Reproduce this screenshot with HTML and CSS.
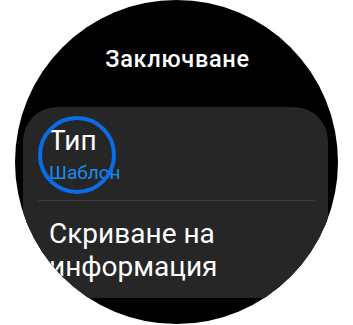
FILE: index.html
```html
<!DOCTYPE html>
<html lang="bg">
<head>
<meta charset="utf-8">
<link rel="stylesheet" href="styles.css">
</head>
<body>
<div class="watch">
  <div class="title">Заключване</div>
  <div class="card">
    <div class="item first">
      <div class="label">Тип</div>
      <div class="sub">Шаблон</div>
      <span class="ring"></span>
    </div>
    <div class="divider"></div>
    <div class="item">
      <div class="label multi">Скриване на информация</div>
    </div>
  </div>
</div>
</body>
</html>
```
FILE: styles.css
```css
html, body {
  margin: 0;
  padding: 0;
  background: #fff;
}
body {
  width: 353px;
  height: 325px;
  overflow: hidden;
  font-family: Roboto, "Noto Sans", sans-serif;
}
.watch {
  width: 323px;
  height: 324px;
  margin-left: 15px;
  border-radius: 50%;
  background: #000;
  overflow: hidden;
  display: flex;
  flex-direction: column;
  align-items: flex-start;
}
.title {
  align-self: stretch;
  text-align: center;
  color: #fff;
  font-size: 23.5px;
  line-height: 24px;
  font-weight: 500;
  letter-spacing: 0.7px;
  padding-top: 47px;
  padding-left: 2px;
  height: 24px;
}
.card {
  margin-top: 36px;
  margin-left: 8px;
  width: 305px;
  height: 191px;
  background: #262626;
  border-radius: 34px 34px 0 0;
  display: flex;
  flex-direction: column;
}
.item {
  padding-left: 26px;
  position: relative;
}
.item.first {
  padding-top: 18px;
}
.label {
  color: #fff;
  font-size: 28px;
  line-height: 32px;
}
.label.multi {
  line-height: 33px;
  padding-top: 16px;
  width: 200px;
}
.sub {
  color: #1a8cf0;
  font-size: 19px;
  line-height: 22px;
  margin-top: 5px;
}
.divider {
  height: 1px;
  background: #3a3a3a;
  margin: 16px 13px 0 15px;
}
.ring {
  position: absolute;
  left: 15px;
  top: 9px;
  width: 70px;
  height: 70px;
  border: 4px solid #0a6de8;
  border-radius: 50%;
}
```
